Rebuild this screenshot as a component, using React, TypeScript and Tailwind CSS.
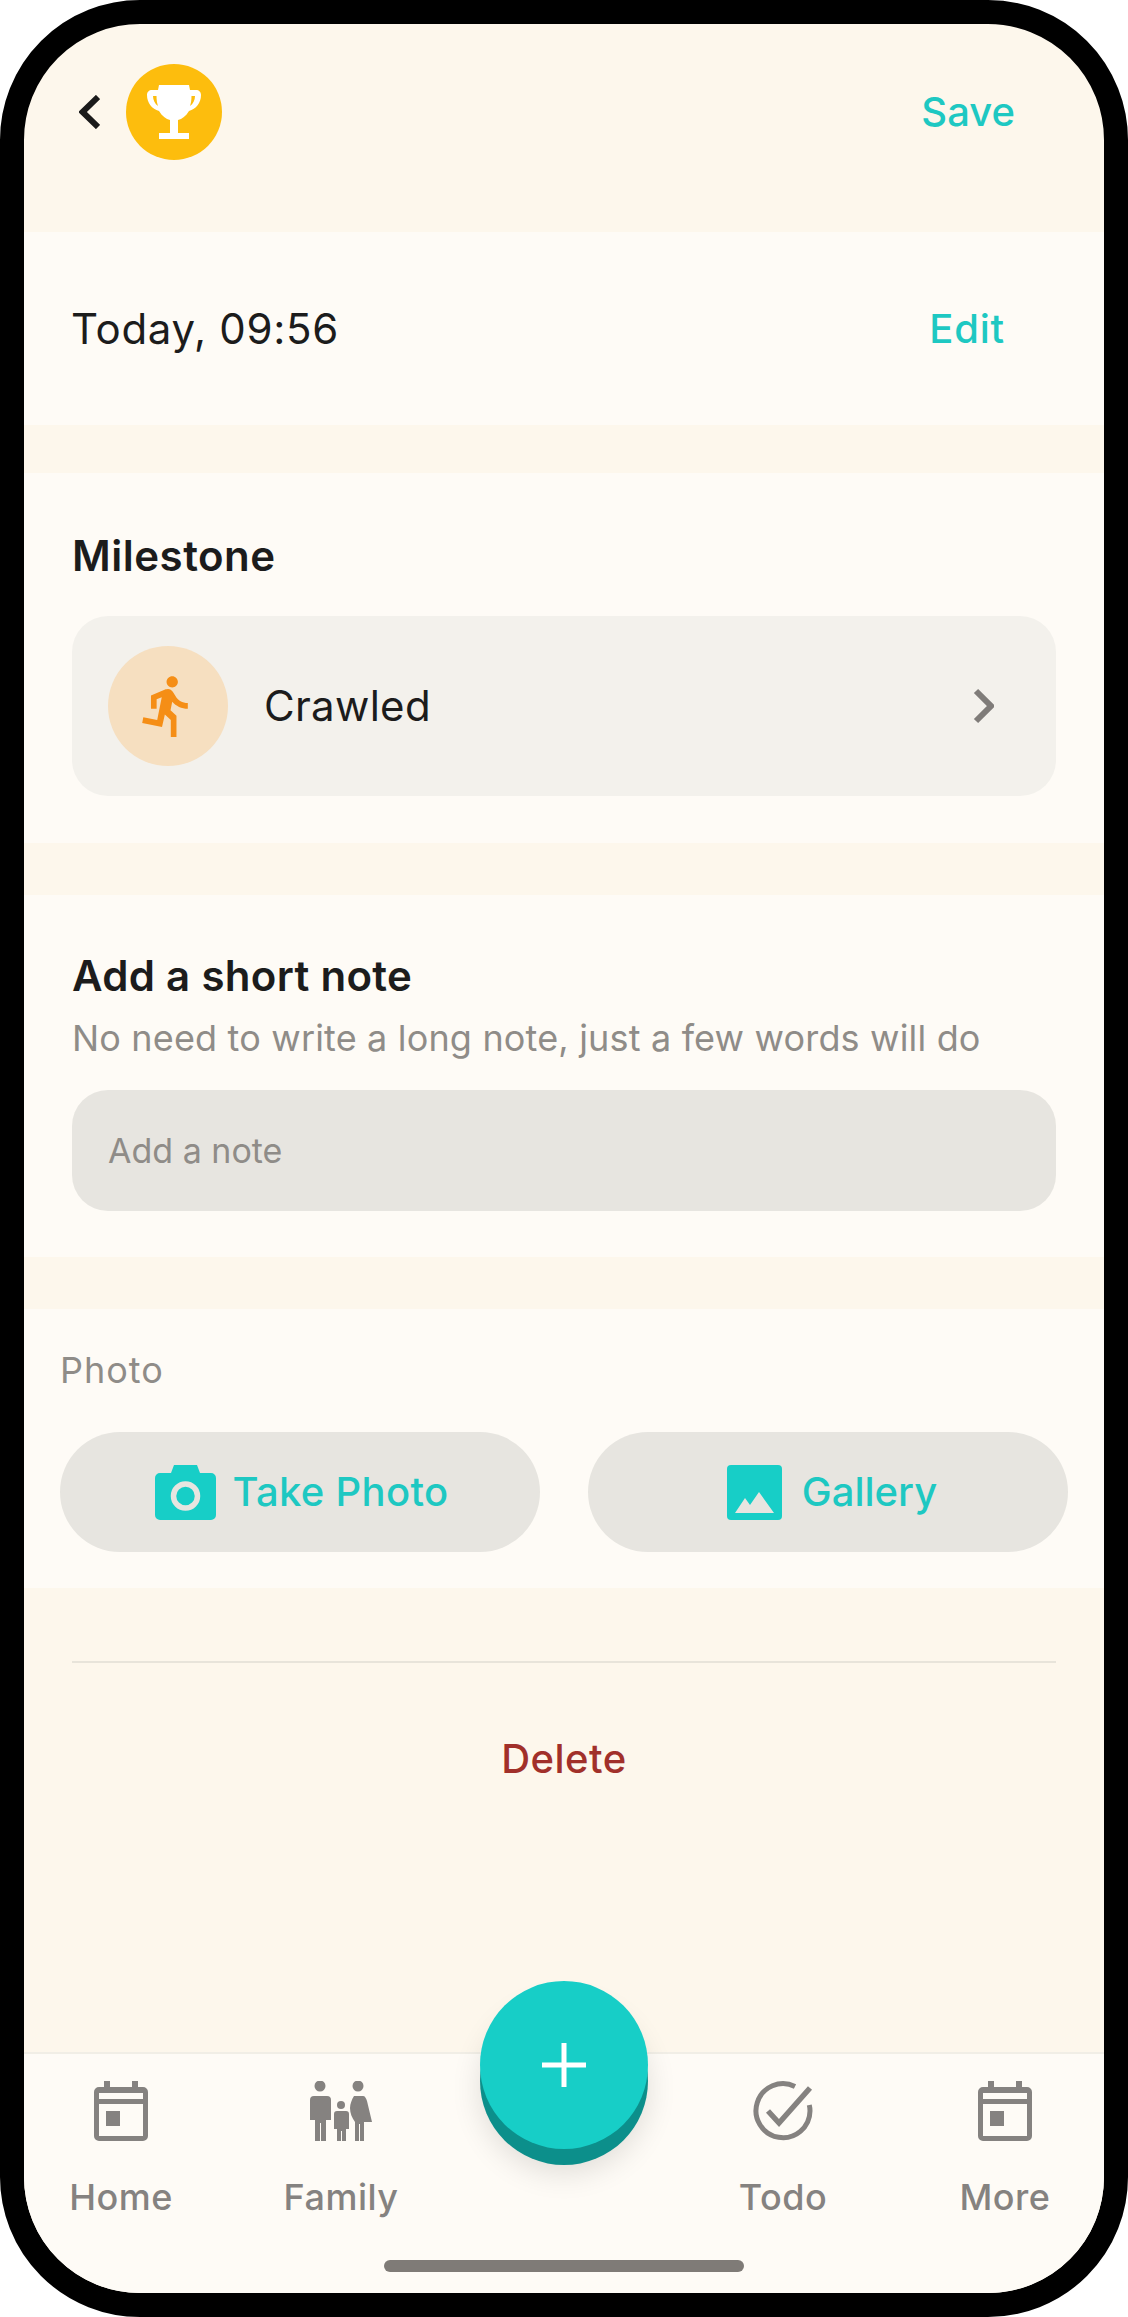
const TEAL = "#17CEC7";
const NAV_GRAY = "#858280";

const CalendarIcon = () => (
  <svg width="54" height="60" viewBox="0 0 54 60" fill={NAV_GRAY}>
    <path d="M10 0h6v6h22V0h6v6h5a5 5 0 0 1 5 5v44a5 5 0 0 1-5 5H5a5 5 0 0 1-5-5V11a5 5 0 0 1 5-5h5zM5 12v6h44v-6zM5 23v32h44V23z" fillRule="evenodd" />
    <rect x="12" y="30" width="14" height="15" />
  </svg>
);

const FamilyIcon = () => (
  <svg width="62" height="60" viewBox="0 0 62 60" fill={NAV_GRAY}>
    <circle cx="10" cy="5" r="5.5" />
    <path d="M4 15h13a4 4 0 0 1 4 4v20h-5v21H11V42h-1v18H5V39H0V19a4 4 0 0 1 4-4z" />
    <circle cx="48" cy="5" r="5.5" />
    <path d="M44 15h9c2 0 3 2 4 5l5 21h-8v19h-4V43h-1v17h-4V41c-3-4-5-9-5-14 0-4 2-9 4-12z" />
    <circle cx="31" cy="24" r="4" />
    <path d="M27 30h9a3 3 0 0 1 3 3v15h-3v12h-4V50h-1v10h-4V48h-3V33a3 3 0 0 1 3-3z" />
  </svg>
);

const TodoIcon = () => (
  <svg width="60" height="60" viewBox="0 0 60 60" fill="none" stroke={NAV_GRAY}>
    <path d="M42 5.500A27 27 0 1 0 57 30c0-2-.2-4-.7-6" strokeWidth="5" />
    <path d="M15 30l11 12L57 7" strokeWidth="5.500" />
  </svg>
);

const Trophy = () => (
  <svg width="54" height="54" viewBox="0 0 54 54" fill="#FFFFFF">
    <path d="M12 0h30l1 5h6c3 0 5 2 5 5 0 8-5 14-12 16-3 5-7 8-11 9v13h11v6H12v-6h11V35c-4-1-8-4-11-9C5 24 0 18 0 10c0-3 2-5 5-5h6zM6 11c0 4 2 8 5 10-1-3-1.500-6-1.500-10zm42 0h-3.500c0 4-.5 7-1.500 10 3-2 5-6 5-10z" fillRule="evenodd" />
  </svg>
);

const RunIcon = () => (
  <svg width="68" height="68" viewBox="0 0 24 24" fill="#F58E16">
    <path d="M13.49 5.48c1.1 0 2-.9 2-2s-.9-2-2-2-2 .9-2 2 .9 2 2 2zm-3.6 13.9l1-4.4 2.1 2v6h2v-7.5l-2.1-2 .6-3c1.3 1.5 3.3 2.5 5.5 2.5v-2c-1.9 0-3.5-1-4.3-2.4l-1-1.6c-.4-.6-1-1-1.700-1-.3 0-.5.1-.8.1l-5.2 2.2v4.7h2v-3.4l1.8-.7-1.6 8.1-4.9-1-.4 2 7 1.4z" />
  </svg>
);

const CameraIcon = () => (
  <svg width="61" height="55" viewBox="0 0 61 55">
    <path d="M19 0h23l3 8h11a5 5 0 0 1 5 5v37a5 5 0 0 1-5 5H5a5 5 0 0 1-5-5V13a5 5 0 0 1 5-5h11z" fill={TEAL} />
    <circle cx="30.5" cy="31" r="12" fill="none" stroke="#E7E5E0" strokeWidth="5.500" />
  </svg>
);

const GalleryIcon = () => (
  <svg width="55" height="55" viewBox="0 0 55 55">
    <rect width="55" height="55" rx="4" fill={TEAL} />
    <path d="M8 48l10-15 5 7 9-13 15 21z" fill="#E7E5E0" />
  </svg>
);

function NavItem({ label, width, children }: { label: string; width: string; children: React.ReactNode }) {
  return (
    <div className={`${width} flex flex-col items-center`}>
      <div className="h-[64px] flex items-center justify-center">{children}</div>
      <span className="mt-[33px] text-[36px] leading-[42px] tracking-[0.5px] font-[450] text-[#858280]">{label}</span>
    </div>
  );
}

export default function App() {
  return (
    <div className="w-[1128px] h-[2317px] bg-white font-['Inter',sans-serif]">
      <div className="relative w-full h-full rounded-[140px] border-[24px] border-black bg-[#FDF7EC] overflow-hidden flex flex-col">
        {/* header */}
        <div className="h-[208px] shrink-0 flex items-start justify-between pl-[55px] pr-[89px] pt-[40px]">
          <div className="flex items-center gap-[26px]">
            <svg width="21" height="34" viewBox="0 0 21 34" fill="none" stroke="#1A1A1A" strokeWidth="6">
              <path d="M19 2L3.500 17 19 32" />
            </svg>
            <div className="w-[96px] h-[96px] rounded-full bg-[#FDBD0D] flex items-center justify-center">
              <Trophy />
            </div>
          </div>
          <span className="mt-[24px] text-[40px] leading-[48px] font-medium text-[#1EC8C2]">Save</span>
        </div>

        {/* date */}
        <div className="h-[193px] shrink-0 bg-[#FEFBF6] flex items-center justify-between pl-[47px] pr-[99px]">
          <span className="text-[42px] leading-[48px] tracking-[0.7px] text-[#1C1C1C]">Today, 09:56</span>
          <span className="text-[40px] leading-[48px] tracking-[0.8px] font-medium text-[#1EC8C2]">Edit</span>
        </div>

        {/* milestone */}
        <div className="mt-[48px] h-[370px] shrink-0 bg-[#FEFBF6] px-[48px] pt-[59px]">
          <h2 className="text-[42px] leading-[48px] tracking-[0.5px] font-semibold text-[#1C1C1C]">Milestone</h2>
          <div className="mt-[36px] h-[180px] rounded-[36px] bg-[#F3F1EC] flex items-center pl-[36px] pr-[62px]">
            <div className="w-[120px] h-[120px] rounded-full bg-[#F6DFC0] flex items-center justify-center">
              <RunIcon />
            </div>
            <span className="ml-[36px] text-[42px] leading-[48px] tracking-[0.3px] text-[#1C1C1C]">Crawled</span>
            <svg className="ml-auto" width="21" height="36" viewBox="0 0 21 36" fill="none" stroke="#7F7C79" strokeWidth="6">
              <path d="M3 3l15 15L3 33" />
            </svg>
          </div>
        </div>

        {/* note */}
        <div className="mt-[52px] h-[362px] shrink-0 bg-[#FEFBF6] px-[48px] pt-[57px]">
          <h2 className="text-[42px] leading-[48px] tracking-[0.3px] font-semibold text-[#1C1C1C]">Add a short note</h2>
          <p className="mt-[17px] text-[36px] leading-[42px] tracking-[0.17px] text-[#8F8C88]">No need to write a long note, just a few words will do</p>
          <div className="mt-[31px] h-[121px] rounded-[36px] bg-[#E7E5E0] flex items-center pl-[36px]">
            <span className="text-[34px] leading-[40px] text-[#8F8C88]">Add a note</span>
          </div>
        </div>

        {/* photo */}
        <div className="mt-[52px] h-[279px] shrink-0 bg-[#FEFBF6] px-[36px] pt-[40px]">
          <span className="block text-[36px] leading-[42px] tracking-[1px] text-[#8F8C88]">Photo</span>
          <div className="mt-[41px] flex gap-[48px]">
            <div className="w-[480px] h-[120px] rounded-full bg-[#E7E5E0] flex items-center justify-center gap-[17px] pl-[3px]">
              <CameraIcon />
              <span className="text-[40px] leading-[48px] tracking-[0.3px] font-medium text-[#1EC8C2]">Take Photo</span>
            </div>
            <div className="w-[480px] h-[120px] rounded-full bg-[#E7E5E0] flex items-center justify-center gap-[20px] pl-[8px]">
              <GalleryIcon />
              <span className="text-[40px] leading-[48px] font-medium text-[#1EC8C2]">Gallery</span>
            </div>
          </div>
        </div>

        {/* delete */}
        <div className="flex-1 px-[48px] pt-[73px]">
          <div className="h-[2px] bg-[#E8E4DA]" />
          <div className="mt-[72px] text-center text-[40px] leading-[48px] tracking-[0.5px] font-medium text-[#A1302A]">Delete</div>
        </div>

        {/* bottom nav */}
        <div className="relative h-[241px] shrink-0 bg-[#FEFBF6] border-t-2 border-[#F1EEE6]">
          <div className="flex pt-[25px]">
            <NavItem label="Home" width="w-[194px]"><CalendarIcon /></NavItem>
            <NavItem label="Family" width="w-[246px]"><FamilyIcon /></NavItem>
            <div className="w-[196px]" />
            <NavItem label="Todo" width="w-[246px]"><TodoIcon /></NavItem>
            <NavItem label="More" width="w-[198px]"><CalendarIcon /></NavItem>
          </div>
          <div className="absolute left-[360px] bottom-[21px] w-[360px] h-[12px] rounded-full bg-[#7F7B77]" />
        </div>

        {/* add button */}
        <div className="absolute left-[456px] top-[1957px] w-[168px] h-[168px] rounded-full bg-[#17CEC7] shadow-[0_16px_0_#0C8F8B,0_24px_30px_rgba(0,0,0,0.12)] flex items-center justify-center">
          <svg width="44" height="44" viewBox="0 0 44 44" stroke="#FFFFFF" strokeWidth="5">
            <path d="M22 0v44M0 22h44" />
          </svg>
        </div>
      </div>
    </div>
  );
}
